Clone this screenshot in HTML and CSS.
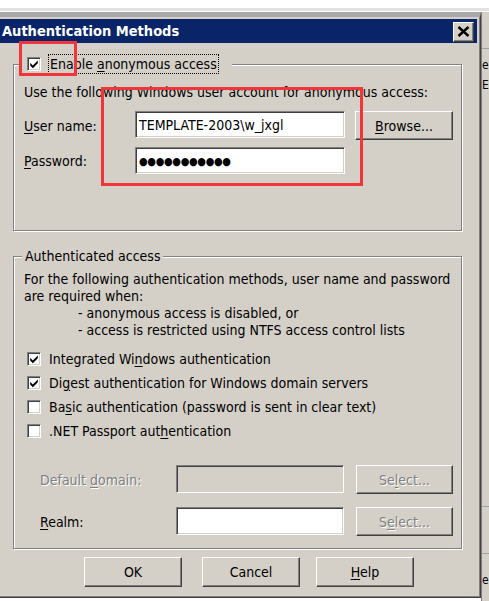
FILE: index.html
```html
<!DOCTYPE html>
<html>
<head>
<meta charset="utf-8">
<link rel="stylesheet" href="styles.css">
</head>
<body>
<div class="top-band"></div>
<div class="screen">
  <div class="dialog">
    <div class="titlebar">
      <span class="title">Authentication Methods</span>
      <span class="close"><svg width="13" height="11" viewBox="0 0 13 11"><path d="M1.5 1 L11.5 10 M11.5 1 L1.5 10" stroke="#000" stroke-width="2.4" fill="none"/></svg></span>
    </div>
    <div class="client">
      <fieldset class="group group-anon">
        <legend class="legend-check">
          <span class="cb"><svg width="10" height="10" viewBox="0 0 10 10"><path d="M1.2 3.8 L3.8 6.4 L8.8 1.4 L8.8 4.2 L3.8 9.2 L1.2 6.6 Z" fill="#000"/></svg></span>
          <span class="focus">Enable <u>a</u>nonymous access</span>
        </legend>
        <p class="intro">Use the following Windows user account for anonymous access:</p>
        <div class="field-row">
          <span class="lbl lbl-a"><u>U</u>ser name:</span>
          <span class="edit edit-a">TEMPLATE-2003\w_jxgl</span>
          <span class="btn btn-side"><span><u>B</u>rowse...</span></span>
        </div>
        <div class="field-row row-pw">
          <span class="lbl lbl-a"><u>P</u>assword:</span>
          <span class="edit edit-a pw">●●●●●●●●●●●</span>
        </div>
      </fieldset>

      <fieldset class="group group-auth">
        <legend class="legend-text">Authenticated access</legend>
        <div class="desc">
          <p>For the following authentication methods, user name and password</p>
          <p>are required when:</p>
          <p class="sub">- anonymous access is disabled, or</p>
          <p class="sub">- access is restricted using NTFS access control lists</p>
        </div>
        <ul class="checks">
          <li><span class="cb"><svg width="10" height="10" viewBox="0 0 10 10"><path d="M1.2 3.8 L3.8 6.4 L8.8 1.4 L8.8 4.2 L3.8 9.2 L1.2 6.6 Z" fill="#000"/></svg></span><span>Integrated Wi<u>n</u>dows authentication</span></li>
          <li><span class="cb"><svg width="10" height="10" viewBox="0 0 10 10"><path d="M1.2 3.8 L3.8 6.4 L8.8 1.4 L8.8 4.2 L3.8 9.2 L1.2 6.6 Z" fill="#000"/></svg></span><span>Di<u>g</u>est authentication for Windows domain servers</span></li>
          <li><span class="cb"></span><span>Ba<u>s</u>ic authentication (password is sent in clear text)</span></li>
          <li><span class="cb"></span><span>.NET Passport aut<u>h</u>entication</span></li>
        </ul>
        <div class="field-row row-domain">
          <span class="lbl lbl-b disabled">Default <u>d</u>omain:</span>
          <span class="edit edit-b edit-disabled"></span>
          <span class="btn btn-side2 disabled"><span>Se<u>l</u>ect...</span></span>
        </div>
        <div class="field-row row-realm">
          <span class="lbl lbl-b"><u>R</u>ealm:</span>
          <span class="edit edit-b"></span>
          <span class="btn btn-side2 disabled"><span>S<u>e</u>lect...</span></span>
        </div>
      </fieldset>

      <div class="buttons">
        <span class="btn btn-ok"><span>OK</span></span>
        <span class="btn btn-cancel"><span>Cancel</span></span>
        <span class="btn btn-help"><span><u>H</u>elp</span></span>
      </div>
    </div>
  </div>
  <div class="behind">
    <div class="bw-line bw-l1"></div>
    <div class="bw-text bw-t1">e</div>
    <div class="bw-text bw-t2">E</div>
    <div class="bw-line bw-l2"></div>
    <div class="bw-line bw-l3"></div>
    <div class="bw-text bw-t3">e</div>
  </div>
</div>
<div class="annot annot-1"></div>
<div class="annot annot-2"></div>
</body>
</html>
```

FILE: styles.css
```css
* { box-sizing: border-box; }
html, body { margin: 0; padding: 0; }
body {
  width: 489px;
  height: 601px;
  overflow: hidden;
  background: #fff;
  font-family: "DejaVu Sans", "Liberation Sans", sans-serif;
  font-stretch: condensed;
  font-size: 14px;
  color: #000;
  position: relative;
}
p { margin: 0; }
u { text-decoration: underline; text-underline-offset: 2px; }

.top-band {
  height: 12px;
  border-top: 8px solid #fff;
  border-bottom: 1px solid #fff;
  background: #e2e2e2;
}

.screen {
  display: flex;
  align-items: flex-start;
}

.dialog {
  width: 485px;
  margin-left: -4px;
  flex: none;
  background: #d4d0c8;
  border-top: 5px solid #a9a9a9;
  border-right: 1px solid #404040;
  border-bottom: 1px solid #404040;
  box-shadow: inset -1px -1px 0 #808080;
  padding: 2px 3px 3px 4px;
}

.titlebar {
  height: 24px;
  background: #0a246a;
  display: flex;
  align-items: center;
  justify-content: space-between;
  padding: 0 3px 0 2px;
}
.title {
  color: #fff;
  font-weight: bold;
  font-size: 14.5px;
}
.close {
  width: 21px;
  height: 20px;
  background: #d4d0c8;
  border: 1px solid;
  border-color: #fff #404040 #404040 #fff;
  box-shadow: inset -1px -1px 0 #808080;
  display: flex;
  align-items: center;
  justify-content: center;
  margin-top: 1px;
}

.client {
  padding: 11px 0 7px 0;
}

.group {
  margin: 0 0 0 13px;
  width: 449px;
  border: 1px solid #808080;
  box-shadow: 1px 1px 0 #fff, inset 1px 1px 0 #fff;
  padding: 0;
  min-inline-size: 0;
}

.legend-check {
  display: flex;
  align-items: center;
  height: 20px;
  margin-left: 5px;
  padding: 0 13px 0 8px;
  background: #d4d0c8;
}
.focus {
  margin-left: 7px;
  height: 20px;
  line-height: 18px;
  padding: 0 1px;
  border: 1px dotted #000;
}

.cb {
  width: 14px;
  height: 14px;
  flex: none;
  background: #fff;
  border: 1px solid;
  border-color: #808080 #fff #fff #808080;
  box-shadow: inset 1px 1px 0 #404040, inset -1px -1px 0 #d4d0c8;
  display: flex;
  align-items: center;
  justify-content: center;
}

.intro {
  margin: 10px 0 0 10px;
  line-height: 17px;
}

.field-row {
  display: flex;
  align-items: center;
  margin-top: 10px;
  height: 29px;
}
.row-pw { margin-top: 7px; height: 27px; margin-bottom: 56px; }

.lbl { flex: none; padding-top: 1px; }
.lbl-a { width: 111px; margin-left: 10px; }
.lbl-b { width: 136px; margin-left: 26px; }

.edit {
  flex: none;
  display: flex;
  align-items: center;
  height: 27px;
  background: #fff;
  border: 1px solid;
  border-color: #808080 #fff #fff #808080;
  box-shadow: inset 1px 1px 0 #404040, inset -1px -1px 0 #d4d0c8;
  padding: 0 3px 0 3px;
  white-space: nowrap;
  align-self: flex-start;
}
.edit-a { width: 210px; }
.edit-b { width: 168px; height: 28px; }
.edit-disabled { background: #d4d0c8; }
.pw {
  font-size: 11px;
  letter-spacing: -0.3px;
  padding-left: 3px;
  padding-top: 1px;
}

.btn {
  flex: none;
  display: flex;
  align-items: center;
  justify-content: center;
  height: 29px;
  background: #d4d0c8;
  border: 1px solid;
  border-color: #fff #404040 #404040 #fff;
  box-shadow: inset -1px -1px 0 #808080;
}
.btn-side { width: 98px; margin-left: 10px; }
.btn-side2 { width: 97px; margin-left: 12px; }

.disabled { color: #808080; text-shadow: 1px 1px 0 #fff; }

.group-auth { margin-top: 17px; }
.legend-text {
  margin-left: 8px;
  padding: 0 3px;
  line-height: 16px;
  background: #d4d0c8;
}
.desc {
  margin: 7px 0 0 10px;
  line-height: 17px;
}
.desc .sub { padding-left: 54px; }

.checks {
  list-style: none;
  margin: 8px 0 0 0;
  padding: 0 0 0 13px;
}
.checks li {
  display: flex;
  align-items: center;
  height: 24px;
}
.checks li .cb { margin-right: 8px; }

.row-domain { margin-top: 22px; }
.row-realm { margin-top: 13px; margin-bottom: 12px; }

.buttons {
  display: flex;
  margin-top: 8px;
}
.buttons .btn { width: 98px; height: 30px; }
.btn-ok { margin-left: 84px; }
.btn-cancel { margin-left: 20px; }
.btn-help { margin-left: 16px; }

.behind {
  flex: 1;
  height: 589px;
  background: #d4d0c8;
  border-left: 1px solid #808080;
  overflow: hidden;
  display: flex;
  flex-direction: column;
  font-size: 12px;
}
.bw-line { height: 1px; flex: none; background: #a0a0a0; }
.bw-l1 { margin-top: 36px; }
.bw-text { line-height: 17px; padding-left: 0; white-space: nowrap; }
.bw-t1 { margin-top: 8px; }
.bw-t2 { margin-top: 3px; }
.bw-l2 { margin-top: 412px; }
.bw-l3 { margin-top: 46px; }
.bw-t3 { margin-top: 18px; }

.annot {
  position: absolute;
  border: 3px solid #f0363a;
  pointer-events: none;
}
.annot-1 { left: 19px; top: 41px; width: 58px; height: 35px; }
.annot-2 { left: 101px; top: 87px; width: 262px; height: 99px; }
```
